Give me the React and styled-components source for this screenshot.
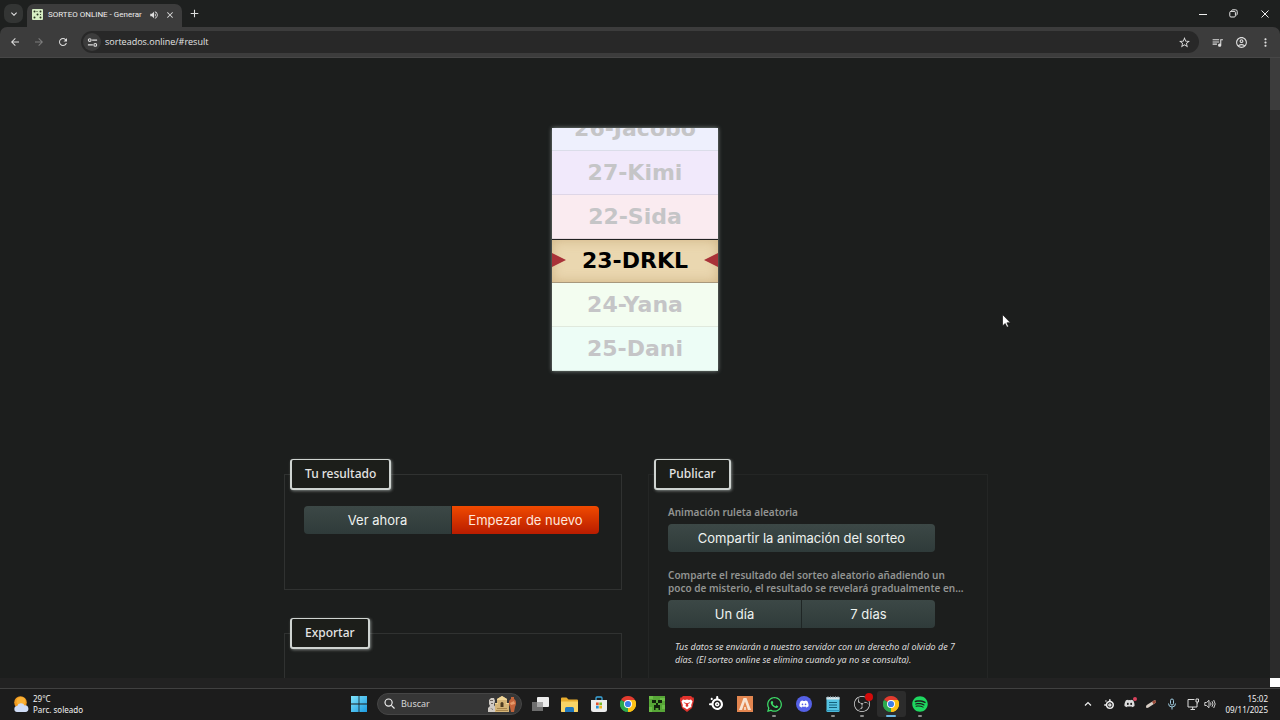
import React from 'react'
import styled, { createGlobalStyle, css } from 'styled-components'
import { FaWhatsapp, FaDiscord, FaSpotify } from 'react-icons/fa'
import { SiObsstudio, SiSteelseries } from 'react-icons/si'
import {
  MdOutlineStarBorder,
  MdQueueMusic,
  MdMoreVert,
  MdOutlineAccountCircle,
  MdArrowBack,
  MdArrowForward,
  MdRefresh,
  MdClose,
  MdAdd,
  MdKeyboardArrowDown,
  MdVolumeUp
} from 'react-icons/md'

const UI_FONT = '"Noto Sans", "Open Sans", sans-serif'
const BUTTON_FONT = 'Inter, "DejaVu Sans", sans-serif'
const WHEEL_FONT = '"DejaVu Sans", Verdana, sans-serif'

const GlobalStyle = createGlobalStyle`
  * {
    box-sizing: border-box;
  }
  body {
    margin: 0;
    background: #1c1e1d;
    font-family: ${UI_FONT};
    overflow: hidden;
  }
  button, input {
    font-family: inherit;
    border: 0;
    padding: 0;
    background: none;
    color: inherit;
  }
`

const Root = styled.div`
  display: flex;
  flex-direction: column;
  height: 100vh;
  color: #e4e4e4;
`

/* browser */

const TabStrip = styled.header`
  display: flex;
  align-items: center;
  flex-shrink: 0;
  height: 27px;
  padding-left: 4px;
  background: #1e201f;
`

const TabSearch = styled.button`
  display: flex;
  align-items: center;
  justify-content: center;
  width: 19px;
  height: 19px;
  border-radius: 7px;
  background: #333534;
  font-size: 12px;
`

const Tab = styled.div`
  display: flex;
  align-items: center;
  align-self: flex-end;
  width: 155px;
  height: 23px;
  margin-left: 4px;
  padding: 0 2px 2px 5px;
  border-radius: 7px 7px 0 0;
  background: #3c3c3c;
`

const TabTitle = styled.span`
  flex: 1;
  margin-left: 5px;
  font-family: Roboto, sans-serif;
  font-size: 8px;
  line-height: 16px;
  white-space: nowrap;
  color: #ececec;
`

const IconButton = styled.button`
  display: flex;
  align-items: center;
  justify-content: center;
  flex-shrink: 0;
  width: ${({ $width }) => $width || 24}px;
  height: 22px;
  font-size: ${({ $size }) => $size || 13}px;
  color: ${({ $dim }) => $dim ? '#7d7d7d' : '#dedede'};
`

const WindowControls = styled.div`
  display: flex;
  margin-left: auto;
`

const Toolbar = styled.nav`
  display: flex;
  align-items: center;
  flex-shrink: 0;
  height: 31px;
  padding: 0 3px;
  border-radius: 7px 7px 0 0;
  border-bottom: 1px solid #474747;
  background: #3c3c3c;
`

const ToolbarBack = styled.div`
  flex-shrink: 0;
  background: #1e201f;
`

const Omnibox = styled.label`
  display: flex;
  align-items: center;
  flex: 1;
  height: 22px;
  margin: 0 6px;
  padding: 0 3px 0 2px;
  border-radius: 11px;
  background: #282828;
`

const SiteInfo = styled.span`
  display: flex;
  align-items: center;
  justify-content: center;
  width: 18px;
  height: 18px;
  margin-right: 4px;
  border-radius: 9px;
  background: #3c3c3c;
`

const Address = styled.input`
  flex: 1;
  min-width: 0;
  font-family: "Open Sans", sans-serif;
  font-size: 9px;
  line-height: 16px;
  color: #e4e4e4;
  outline: none;
`

/* page */

const Viewport = styled.div`
  display: grid;
  grid-template-columns: 1fr 10px;
  grid-template-rows: 1fr 10px;
  flex: 1;
  min-height: 0;
`

const Page = styled.main`
  min-width: 0;
  overflow: hidden;
  padding-top: 70px;
  background: #1c1e1d;
`

const ScrollTrack = styled.div`
  background: ${({ $horizontal }) => $horizontal ? '#222222' : '#2b2b2b'};
`

const ScrollThumb = styled.div`
  height: 52px;
  background: #3c3c3c;
`

const ScrollCorner = styled.div`
  border-bottom: 1px solid #222;
  background: #fff;
`

const Wheel = styled.div`
  display: flex;
  flex-direction: column;
  justify-content: flex-end;
  width: 166px;
  height: 243px;
  margin: 0 auto;
  overflow: hidden;
  background: #fff;
  box-shadow: 0 0 4px rgba(200, 220, 215, 0.6);
`

const WheelRow = styled.div`
  display: flex;
  align-items: center;
  justify-content: center;
  flex-shrink: 0;
  height: 44px;
  border-bottom: 1px solid rgba(0, 0, 0, 0.08);
  background: ${({ $color }) => $color};
  font-family: ${WHEEL_FONT};
  font-size: 22px;
  font-weight: bold;
  color: #c5c5c7;
  ${({ $active }) => $active && css`
    justify-content: space-between;
    padding-bottom: 2px;
    border-top: 1px solid #222;
    border-bottom: 1px solid #a8987c;
    box-shadow: inset 0 0 12px rgba(170, 130, 70, 0.4);
    color: #000;
  `}
`

const Columns = styled.div`
  display: grid;
  grid-template-columns: 338px 340px;
  justify-content: center;
  column-gap: 26px;
  margin-top: 88px;
  padding-left: 2px;
`

const Column = styled.div`
  display: flex;
  flex-direction: column;
  gap: 28px;
`

const Panel = styled.fieldset`
  min-width: 0;
  min-height: ${({ $height }) => $height}px;
  margin: 0;
  padding: 0 5px;
  border: 1px solid ${({ $faint }) => $faint ? '#242625' : '#303231'};
`

const PanelTitle = styled.legend`
  height: 31px;
  padding: 0 13px;
  border: 2px solid #cfd4d1;
  border-top-width: 1px;
  border-radius: 3px;
  background: #1c1e1a;
  box-shadow: 1px 1px 3px rgba(220, 230, 225, 0.5);
  font-size: 12px;
  font-weight: 500;
  line-height: 27px;
  color: #e4e4e4;
`

const PanelBody = styled.div`
  padding: ${({ $top }) => $top}px 14px 0;
`

const ButtonRow = styled.div`
  display: flex;
  width: ${({ $width }) => $width}px;
  border-radius: 4px;
  overflow: hidden;
`

const ActionButton = styled.button`
  flex: 1;
  height: 28px;
  background: linear-gradient(#3c4846, #2f3b3a);
  font-family: ${BUTTON_FONT};
  font-size: 13px;
  line-height: 28px;
  color: #eef2f0;
  & + & {
    border-left: 1px solid #1f2625;
  }
  ${({ $primary }) => $primary && css`
    background: linear-gradient(#f04a00, #b81c00);
    color: #ffe6dc;
  `}
`

const Hint = styled.p`
  margin: 0 0 5px;
  font-size: 10px;
  font-weight: 600;
  line-height: 13px;
  color: #929492;
  & + ${ButtonRow} {
    margin-bottom: 17px;
  }
`

const Note = styled.p`
  margin: -5px 0 0;
  padding-left: 7px;
  font-size: 9px;
  font-style: italic;
  line-height: 13px;
  color: #dcdcdc;
`

/* desktop */

const Taskbar = styled.footer`
  display: grid;
  grid-template-columns: 1fr auto 1fr;
  align-items: center;
  flex-shrink: 0;
  height: 32px;
  padding-bottom: 2px;
  border-top: 1px solid #414141;
  background: #1c1c1c;
`

const Weather = styled.div`
  display: flex;
  align-items: center;
  gap: 4px;
  padding-left: 13px;
  font-size: 8px;
  line-height: 11px;
  color: #f2f2f2;
`

const Dock = styled.div`
  display: flex;
  align-items: center;
`

const StartButton = styled.button`
  display: flex;
  align-items: center;
  justify-content: center;
  width: 28px;
  height: 26px;
`

const SearchBox = styled.label`
  display: flex;
  align-items: center;
  width: 145px;
  height: 22px;
  margin: 0 4px;
  padding: 0 4px 0 6px;
  border: 1px solid #454545;
  border-radius: 11px;
  background: #363636;
`

const SearchInput = styled.input`
  flex: 1;
  min-width: 0;
  margin-left: 6px;
  font-size: 9px;
  line-height: 16px;
  outline: none;
  &::placeholder {
    color: #d6d6d6;
    opacity: 1;
  }
`

const DockApps = styled.div`
  display: grid;
  grid-template-columns: repeat(14, 1fr);
  width: 409px;
`

const DockButton = styled.button`
  display: flex;
  flex-direction: column;
  align-items: center;
  justify-content: space-between;
  height: 26px;
  padding-top: 5px;
  border-radius: 3px;
  background: ${({ $active }) => $active ? '#2c2c2c' : 'transparent'};
  font-size: 16px;
  &::after {
    content: '';
    width: ${({ $active }) => $active ? 10 : 4}px;
    height: 2px;
    border-radius: 1px;
    background: ${({ $active, $open }) => $active ? '#6cb8e6' : $open ? '#8c8c8c' : 'transparent'};
  }
`

const Tray = styled.div`
  display: flex;
  align-items: center;
  justify-content: flex-end;
  padding-right: 12px;
`

const TrayItem = styled.span`
  display: flex;
  align-items: center;
  justify-content: center;
  width: ${({ $width }) => $width || 21}px;
  font-size: 10px;
  color: #eee;
`

const Clock = styled.time`
  margin-left: 8px;
  font-size: 8px;
  line-height: 11px;
  text-align: right;
  color: #f2f2f2;
`

const Cursor = styled.svg`
  position: absolute;
  left: 1002px;
  top: 314px;
`

const Svg = ({ size = 16, box = 16, children }) => (
  <svg width={size} height={size} viewBox={`0 0 ${box} ${box}`} fill="none" aria-hidden="true">
    {children}
  </svg>
)

const Favicon = () => (
  <Svg size={11} box={11}>
    <rect width="11" height="11" rx="1" fill="#d6efc4" />
    <g fill="#27331f">
      <circle cx="2.5" cy="2.5" r="1" />
      <circle cx="8.5" cy="2.5" r="1" />
      <circle cx="5.5" cy="5.5" r="1" />
      <circle cx="2.5" cy="8.5" r="1" />
      <circle cx="8.5" cy="8.5" r="1" />
      <circle cx="5" cy="2.5" r=".6" />
      <circle cx="8.5" cy="5.5" r=".6" />
    </g>
  </Svg>
)

const TuneIcon = () => (
  <Svg size={11} box={12}>
    <g stroke="#e0e0e0" strokeWidth="1.2">
      <circle cx="3" cy="3.4" r="1.5" />
      <path d="M5.6 3.4H11M1 8.6h5.4" />
      <circle cx="9" cy="8.6" r="1.5" />
    </g>
  </Svg>
)

const RestoreIcon = () => (
  <Svg size={9} box={9}>
    <g stroke="#e8e8e8">
      <rect x=".8" y="2.4" width="5.6" height="5.6" rx="1.2" />
      <path d="M2.6 2V1.6q.2-.8 1.2-.8h2.8q1.600 0 1.600 1.600V5q0 1-.8 1.200" />
    </g>
  </Svg>
)

const Arrow = ({ flip }) => (
  <svg width="14" height="14" viewBox="0 0 14 14" aria-hidden="true">
    <path d={flip ? 'M14 0v14L0 7z' : 'M0 0v14L14 7z'} fill="#a83238" />
  </svg>
)

const SunCloud = () => (
  <Svg size={16}>
    <circle cx="7.500" cy="6.500" r="6.300" fill="#f29a1f" />
    <circle cx="8" cy="5.500" r="4.500" fill="#f9b136" />
    <path d="M4.500 16a3 3 0 0 1-.3-6 4 4 0 0 1 7.400-.6A3.300 3.300 0 0 1 12.500 16z" fill="#cfdcf6" />
  </Svg>
)

const WindowsLogo = () => (
  <Svg>
    <defs>
      <linearGradient id="win" x1="0" y1="0" x2="1" y2="1">
        <stop stopColor="#7fe3fb" />
        <stop offset="1" stopColor="#1c9be0" />
      </linearGradient>
    </defs>
    <path d="M0 0h7.600v7.600H0zM8.400 0H16v7.600H8.400zM0 8.400h7.600V16H0zM8.400 8.400H16V16H8.400z" fill="url(#win)" />
  </Svg>
)

const SearchGlyph = () => (
  <Svg size={11} box={12}>
    <g stroke="#eee" strokeWidth="1.300">
      <circle cx="5" cy="5" r="3.900" />
      <path d="M8 8l3.500 3.500" />
    </g>
  </Svg>
)

// temple, bust and vase shown at the end of the search box
const SearchArt = () => (
  <svg width="30" height="18" viewBox="0 0 30 18" aria-hidden="true">
    <path d="M1 17V13l2-2-1-2V5l2-2h3l1 3-1 4 2 3v4z" fill="#cfcac4" />
    <path d="M3 5h3v1H3zM4 8h2v1H4zM3 13l3 1v1z" fill="#6d665f" />
    <path d="M8 17V8h2V4l5-3 5 3v4h2v9z" fill="#d4b477" />
    <path d="M10 4l5-3 5 3v1H10zM8 8h3v1H8zM19 8h3v1h-3z" fill="#f0d596" />
    <path d="M13.500 8.500a1.500 1.500 0 0 1 3 0V12h-3z" fill="#4b3a20" />
    <path d="M10 13h10v1H10zM9 15h12v1H9z" fill="#a8854c" />
    <path d="M24 2h3v2c2 1 3 4 1 8l-1 5h-3l-1-5c-2-4-1-7 1-8z" fill="#c4643a" />
    <path d="M23 8l4-2 1 3-4 1z" fill="#e79a6a" />
  </svg>
)

const TaskView = () => (
  <Svg size={17} box={17}>
    <rect x="0" y="6" width="11" height="9" fill="#6d6d6d" />
    <rect x="5" y="1" width="12" height="10" rx="1" fill="#ececec" />
    <path d="M5 6h6v5H5z" fill="#a7a7a7" />
  </Svg>
)

const Folder = () => (
  <Svg size={17} box={17}>
    <path d="M0 2.500Q0 1.500 1 1.500h4.500L7.500 3.500H16q1 0 1 1V15q0 1-1 1H1q-1 0-1-1z" fill="#e9ad2e" />
    <path d="M0 5.500h17V15q0 1-1 1H1q-1 0-1-1z" fill="#f8d467" />
    <path d="M4 16v-3.500q0-1.500 1.500-1.500h6q1.500 0 1.500 1.500V16z" fill="#1f77be" />
  </Svg>
)

const Store = () => (
  <Svg>
    <path d="M5 4V2q0-1 1-1h4q1 0 1 1v2" stroke="#3ba7dc" strokeWidth="1.300" />
    <path d="M0 4h16v9.500Q16 16 13.500 16h-11Q0 16 0 13.500z" fill="#ececec" />
    <path d="M5 6.500h2.700v2.700H5z" fill="#e2512b" />
    <path d="M8.300 6.500H11v2.700H8.300z" fill="#76b82a" />
    <path d="M5 9.800h2.700v2.700H5z" fill="#2492d8" />
    <path d="M8.300 9.800H11v2.700H8.300z" fill="#efb41c" />
  </Svg>
)

const ChromeLogo = () => (
  <Svg>
    <path d="M8 8 1.070 4A8 8 0 0 1 14.930 4z" fill="#e33b2e" />
    <path d="M8 8 14.930 4A8 8 0 0 1 8 16z" fill="#fbc116" />
    <path d="M8 8V16A8 8 0 0 1 1.070 4z" fill="#2da94f" />
    <path d="M8 4h6.930A8 8 0 0 1 8 16l3.460-6z" fill="#fbc116" />
    <path d="M1.070 4l3.470 6L8 12l-1.500 3.860A8 8 0 0 1 1.070 4z" fill="#2da94f" />
    <circle cx="8" cy="8" r="4" fill="#fff" />
    <circle cx="8" cy="8" r="3.100" fill="#3f7ee8" />
  </Svg>
)

const Creeper = () => (
  <Svg>
    <path d="M0 0h16v16H0z" fill="#57a637" />
    <path d="M0 0h4v3H0zM11 2h5v3h-5zM0 11h3v5H0zM13 9h3v4h-3z" fill="#6cbf48" />
    <path d="M3 4h4v3H3zM9 4h4v3H9zM7 7h2v2h2v5H9.500v-2h-3v2H5V9h2z" fill="#12210c" />
  </Svg>
)

const BraveIcon = () => (
  <Svg>
    <path d="M4 0h8l1.500 1.500h1.300L15 4.500 13 12l-5 4-5-4L1 4.500l.2-3h1.300z" fill="#e0322c" />
    <path d="M4 3.500l2 .5 2-.6 2 .6 2-.5 1.500 2-1.300 3.500.2 2L10 12l-2 1.500L6 12l-2.400-1 .2-2L2.500 5.500z" fill="#fff" />
    <path d="M4.500 6l2.500 1-.6 1.200zM11.500 6L9 7l.6 1.200zM7.200 7h1.600l.6 3L8 11l-1.400-1zM5 9.500l1.500 1.300zM11 9.500l-1.500 1.300z" fill="#e0322c" />
  </Svg>
)

const OrangeApp = () => (
  <Svg>
    <path d="M0 0h16v16H0z" fill="#e38650" />
    <path d="M6.500 2h3L14 14h-3L8 5.500 5 14H2z" fill="#f8e3d2" />
    <path d="M7.200 11h1.600v3H7.200z" fill="#f8e3d2" />
  </Svg>
)

const DiscordBadge = styled.span`
  display: flex;
  align-items: center;
  justify-content: center;
  width: 16px;
  height: 16px;
  border-radius: 8px;
  background: #5561e6;
  color: #fff;
  font-size: 10px;
`

const Notepad = () => (
  <Svg>
    <rect x="1.500" y="1" width="13" height="15" rx="1" fill="#55c3e2" />
    <path d="M1.500 1h13v2.500h-13z" fill="#d5e4ea" />
    <path d="M3 0v2M5.500 0v2M8 0v2M10.500 0v2M13 0v2" stroke="#8aa0a8" strokeWidth=".8" />
    <path d="M4 6.500h8M4 9h8M4 11.500h8" stroke="#14617c" />
    <path d="M1.500 14h13v1.200h-13z" fill="#2d94b8" />
  </Svg>
)

const Recording = styled.span`
  position: relative;
  display: flex;
  color: #dcdcdc;
  &::after {
    content: '';
    position: absolute;
    top: -3px;
    right: -3px;
    width: 8px;
    height: 8px;
    border-radius: 4px;
    background: #d40a0a;
  }
`

const TrayDiscord = styled(Recording)`
  font-size: 11px;
  &::after {
    top: -1px;
    right: -2px;
    width: 4px;
    height: 4px;
    background: #d8415c;
  }
`

const Pen = () => (
  <Svg size={12} box={12}>
    <path d="M1 9.500q-.5-2 1.500-3L9 2.500q1.500-.5 2 .8.300 1.200-1 2L3.500 9.500q-1.500.8-2.500 0z" fill="#d8cdc4" />
    <path d="M7 3.800l2-1.300q1.500-.5 2 .8.300 1.200-1 2L8.600 6.200z" fill="#9c4a38" />
  </Svg>
)

const Mic = () => (
  <Svg size={12} box={12}>
    <rect x="4.500" y="1" width="3" height="6" rx="1.500" stroke="#9fcbe0" />
    <path d="M2.500 5.500a3.500 3.500 0 0 0 7 0M6 9v2.500" stroke="#9fcbe0" />
  </Svg>
)

const Network = () => (
  <Svg size={12} box={12}>
    <path d="M7.500 1.500H1v7.500h9V5.500M3.500 11.500h4.500M5.700 9v2" stroke="#ddd" />
    <path d="M9 1h2.500v3H9zM10.200 4v2" stroke="#ddd" />
  </Svg>
)

const Speaker = () => (
  <Svg size={12} box={12}>
    <path d="M.8 4.500h1.700L5 2.300v7.400L2.500 7.500H.8zM6.500 4.500q1 1.500 0 3M8 3.200q2 2.800 0 5.600M9.700 2q3 4 0 8" stroke="#e4e4e4" strokeWidth=".9" />
  </Svg>
)

const wheelRows = [
  { label: '26-Jacobo', color: '#eef0fd' },
  { label: '27-Kimi', color: '#f1e9fb' },
  { label: '22-Sida', color: '#faebf0' },
  { label: '23-DRKL', color: '#ead7b0', active: true },
  { label: '24-Yana', color: '#f3fdf0' },
  { label: '25-Dani', color: '#edfdf6' }
]

const dockApps = [
  { name: 'Vista de tareas', icon: <TaskView /> },
  { name: 'Explorador', icon: <Folder /> },
  { name: 'Store', icon: <Store /> },
  { name: 'Chrome personal', icon: <ChromeLogo /> },
  { name: 'Minecraft', icon: <Creeper /> },
  { name: 'Brave', icon: <BraveIcon /> },
  { name: 'SteelSeries', icon: <SiSteelseries size={14} color="#fff" /> },
  { name: 'Editor', icon: <OrangeApp /> },
  { name: 'WhatsApp', icon: <FaWhatsapp size={17} color="#3ddc68" />, open: true },
  { name: 'Discord', icon: <DiscordBadge><FaDiscord /></DiscordBadge> },
  { name: 'Bloc de notas', icon: <Notepad />, open: true },
  { name: 'OBS', icon: <Recording><SiObsstudio /></Recording>, open: true },
  { name: 'Chrome', icon: <ChromeLogo />, active: true },
  { name: 'Spotify', icon: <FaSpotify color="#1ed760" />, open: true }
]

const Browser = () => (
  <>
    <TabStrip>
      <TabSearch aria-label="Buscar pestañas"><MdKeyboardArrowDown /></TabSearch>
      <Tab>
        <Favicon />
        <TabTitle>SORTEO ONLINE - Generar</TabTitle>
        <IconButton aria-label="Silenciar" $size={10} $width={12}><MdVolumeUp /></IconButton>
        <IconButton aria-label="Cerrar pestaña" $size={10} $width={20}><MdClose /></IconButton>
      </Tab>
      <IconButton aria-label="Nueva pestaña" $width={24}><MdAdd /></IconButton>
      <WindowControls>
        <IconButton aria-label="Minimizar" $width={30}>
          <Svg size={8} box={8}><path d="M0 4.500h8" stroke="#eee" /></Svg>
        </IconButton>
        <IconButton aria-label="Restaurar" $width={31}><RestoreIcon /></IconButton>
        <IconButton aria-label="Cerrar" $width={31}>
          <Svg size={8} box={8}><path d="M.5.5l7 7M7.500.5l-7 7" stroke="#eee" /></Svg>
        </IconButton>
      </WindowControls>
    </TabStrip>
    <ToolbarBack>
      <Toolbar>
        <IconButton aria-label="Atrás" $size={12}><MdArrowBack /></IconButton>
        <IconButton aria-label="Adelante" $size={12} $dim><MdArrowForward /></IconButton>
        <IconButton aria-label="Recargar" $size={12}><MdRefresh /></IconButton>
        <Omnibox>
          <SiteInfo><TuneIcon /></SiteInfo>
          <Address aria-label="Dirección" defaultValue="sorteados.online/#result" />
          <IconButton as="span"><MdOutlineStarBorder /></IconButton>
        </Omnibox>
        <IconButton aria-label="Multimedia"><MdQueueMusic /></IconButton>
        <IconButton aria-label="Perfil"><MdOutlineAccountCircle /></IconButton>
        <IconButton aria-label="Menú"><MdMoreVert /></IconButton>
      </Toolbar>
    </ToolbarBack>
  </>
)

const Roulette = () => (
  <Wheel>
    {wheelRows.map(({ label, color, active }) => (
      <WheelRow key={label} $color={color} $active={active}>
        {active && <Arrow />}
        {label}
        {active && <Arrow flip />}
      </WheelRow>
    ))}
  </Wheel>
)

const Panels = () => (
  <Columns>
    <Column>
      <Panel $height={131}>
        <PanelTitle>Tu resultado</PanelTitle>
        <PanelBody $top={16}>
          <ButtonRow $width={295}>
            <ActionButton>Ver ahora</ActionButton>
            <ActionButton $primary>Empezar de nuevo</ActionButton>
          </ButtonRow>
        </PanelBody>
      </Panel>
      <Panel $height={131}>
        <PanelTitle>Exportar</PanelTitle>
      </Panel>
    </Column>
    <Column>
      <Panel $height={260} $faint>
        <PanelTitle>Publicar</PanelTitle>
        <PanelBody $top={16}>
          <Hint>Animación ruleta aleatoria</Hint>
          <ButtonRow $width={267}>
            <ActionButton>Compartir la animación del sorteo</ActionButton>
          </ButtonRow>
          <Hint>
            Comparte el resultado del sorteo aleatorio añadiendo un
            poco de misterio, el resultado se revelará gradualmente en...
          </Hint>
          <ButtonRow $width={267}>
            <ActionButton>Un día</ActionButton>
            <ActionButton>7 días</ActionButton>
          </ButtonRow>
          <Note>
            Tus datos se enviarán a nuestro servidor con un derecho al olvido de 7
            días. (El sorteo online se elimina cuando ya no se consulta).
          </Note>
        </PanelBody>
      </Panel>
    </Column>
  </Columns>
)

const Desktop = () => (
  <Taskbar>
    <Weather>
      <SunCloud />
      <div>
        <div>29°C</div>
        <div>Parc. soleado</div>
      </div>
    </Weather>
    <Dock>
      <StartButton aria-label="Inicio"><WindowsLogo /></StartButton>
      <SearchBox>
        <SearchGlyph />
        <SearchInput aria-label="Buscar" placeholder="Buscar" />
        <SearchArt />
      </SearchBox>
      <DockApps>
        {dockApps.map(({ name, icon, open, active }) => (
          <DockButton key={name} aria-label={name} $open={open} $active={active}>
            {icon}
          </DockButton>
        ))}
      </DockApps>
    </Dock>
    <Tray>
      <TrayItem>
        <Svg size={8} box={8}><path d="M1 5.500l3-3 3 3" stroke="#eee" strokeWidth="1.200" /></Svg>
      </TrayItem>
      <TrayItem><SiSteelseries /></TrayItem>
      <TrayItem><TrayDiscord><FaDiscord /></TrayDiscord></TrayItem>
      <TrayItem><Pen /></TrayItem>
      <TrayItem><Mic /></TrayItem>
      <TrayItem><Network /></TrayItem>
      <TrayItem $width={14}><Speaker /></TrayItem>
      <Clock>
        15:02
        <br />
        09/11/2025
      </Clock>
    </Tray>
  </Taskbar>
)

const App = () => (
  <Root>
    <GlobalStyle />
    <Browser />
    <Viewport>
      <Page>
        <Roulette />
        <Panels />
      </Page>
      <ScrollTrack><ScrollThumb /></ScrollTrack>
      <ScrollTrack $horizontal />
      <ScrollCorner />
    </Viewport>
    <Desktop />
    <Cursor width="9" height="14" viewBox="0 0 9 14" aria-hidden="true">
      <path d="M.5.5v11.500l2.700-2.500 1.700 3.800 1.700-.8-1.700-3.700h3.600z" fill="#fff" stroke="#111" strokeWidth=".7" />
    </Cursor>
  </Root>
)

export default App
